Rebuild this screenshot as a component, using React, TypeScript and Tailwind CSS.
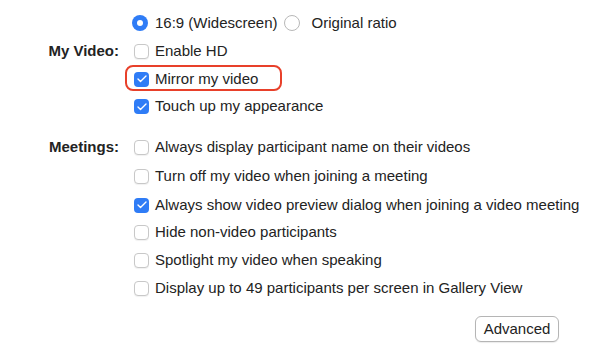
import { Check } from "lucide-react";

const font = { fontFamily: '"Liberation Sans", Arial, sans-serif' };

function Box({ checked }: { checked?: boolean }) {
  return checked ? (
    <span className="flex h-[15px] w-[15px] shrink-0 items-center justify-center rounded-[4px] bg-[#2f7cf6]">
      <Check className="h-[12px] w-[12px] text-white" strokeWidth={2.75} />
    </span>
  ) : (
    <span className="h-[15px] w-[15px] shrink-0 rounded-[4px] border border-[#c8c8c8] bg-white shadow-[0_1px_1px_rgba(0,0,0,0.06)]" />
  );
}

function Row({ checked, label, className = "" }: { checked?: boolean; label: string; className?: string }) {
  return (
    <div className={`flex items-center gap-[6px] ${className}`}>
      <Box checked={checked} />
      <span>{label}</span>
    </div>
  );
}

export default function App() {
  return (
    <div
      className="relative h-[357px] w-[600px] overflow-hidden bg-white text-[15px] text-[#232323]"
      style={font}
    >
      <div className="grid grid-cols-[119px_1fr] gap-x-[15px] pt-[9px]">
        {/* aspect ratio */}
        <div />
        <div className="flex h-[28px] items-center">
          <span className="-ml-[2px] flex h-[16px] w-[16px] items-center justify-center rounded-full bg-[#2f7cf6]">
            <span className="h-[6px] w-[6px] rounded-full bg-white" />
          </span>
          <span className="ml-[7px]">16:9 (Widescreen)</span>
          <span className="ml-[6px] h-[16px] w-[16px] rounded-full border border-[#b8b8b8] bg-white" />
          <span className="ml-[12px]">Original ratio</span>
        </div>

        {/* My Video */}
        <div className="flex h-[28px] items-center justify-end font-bold">My Video:</div>
        <div className="flex flex-col">
          <Row label="Enable HD" className="h-[28px]" />
          <div className="relative h-[28px]">
            <Row checked label="Mirror my video" className="h-[28px]" />
            <span className="pointer-events-none absolute left-[-9px] top-0 h-[26px] w-[157px] rounded-[8px] border-2 border-[#e8402a]" />
          </div>
          <Row checked label="Touch up my appearance" className="h-[27px]" />
        </div>

        {/* Meetings */}
        <div className="mt-[13px] flex h-[28px] items-center justify-end font-bold">Meetings:</div>
        <div className="mt-[13px] flex flex-col">
          <Row label="Always display participant name on their videos" className="h-[28px]" />
          <Row label="Turn off my video when joining a meeting" className="h-[31px]" />
          <Row checked label="Always show video preview dialog when joining a video meeting" className="h-[26px]" />
          <Row label="Hide non-video participants" className="h-[28px]" />
          <Row label="Spotlight my video when speaking" className="h-[29px]" />
          <Row label="Display up to 49 participants per screen in Gallery View" className="h-[27px]" />
        </div>
      </div>

      <div className="mt-[14px] flex justify-end pr-[41px]">
        <button className="h-[26px] w-[84px] rounded-[6px] border border-[#b5b5b5] bg-white text-[15px] text-[#232323] shadow-[0_1px_1px_rgba(0,0,0,0.08)]">
          Advanced
        </button>
      </div>
    </div>
  );
}
